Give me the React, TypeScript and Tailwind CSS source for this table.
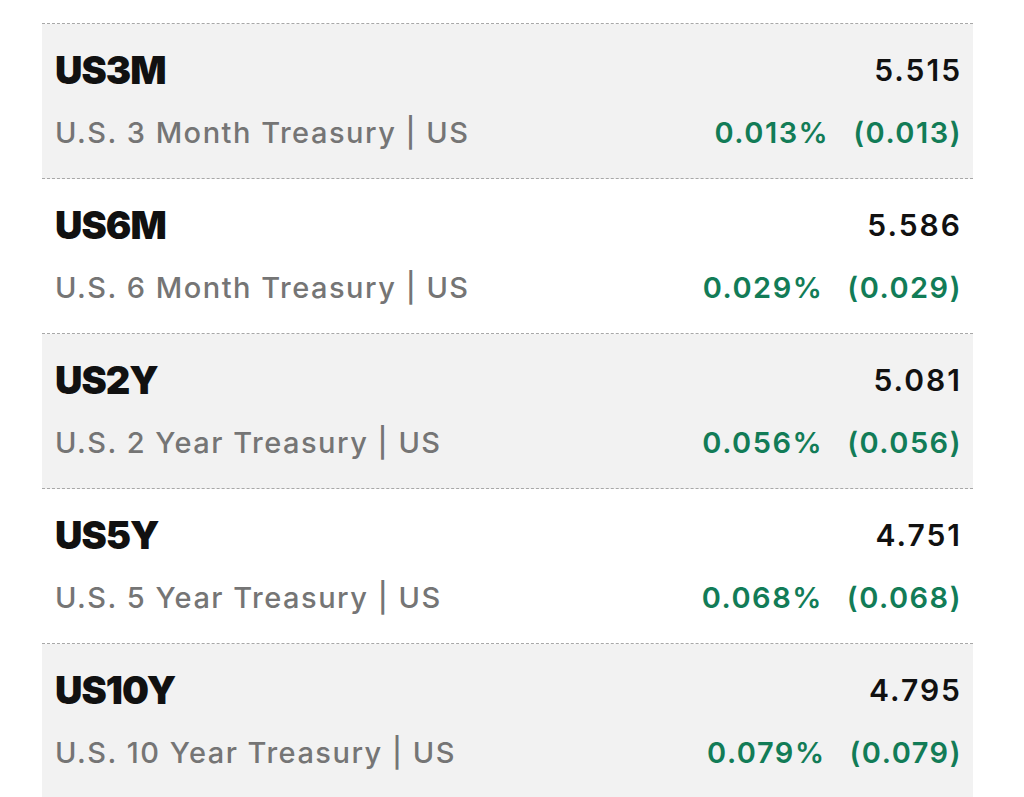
const rows = [
  { sym: 'US3M', name: 'U.S. 3 Month Treasury | US', last: '5.515', pct: '0.013%', chg: '(0.013)' },
  { sym: 'US6M', name: 'U.S. 6 Month Treasury | US', last: '5.586', pct: '0.029%', chg: '(0.029)' },
  { sym: 'US2Y', name: 'U.S. 2 Year Treasury | US', last: '5.081', pct: '0.056%', chg: '(0.056)' },
  { sym: 'US5Y', name: 'U.S. 5 Year Treasury | US', last: '4.751', pct: '0.068%', chg: '(0.068)' },
  { sym: 'US10Y', name: 'U.S. 10 Year Treasury | US', last: '4.795', pct: '0.079%', chg: '(0.079)' },
];

export default function App() {
  return (
    <div className="min-h-screen bg-white pt-[23px] pl-[42px] pr-[51px] font-['Inter','Liberation_Sans',sans-serif]">
      <div className="border-t border-dashed border-[#a8a8a8]">
        {rows.map((r, i) => (
          <div
            key={r.sym}
            className={`flex h-[155px] flex-col border-b border-dashed border-[#a8a8a8] pl-[13px] pr-[11px] pt-[23px] ${
              i % 2 === 0 ? 'bg-[#f2f2f2]' : 'bg-white'
            }`}
          >
            <div className="flex items-center justify-between">
              <span className="text-[38px] leading-[46px] font-black tracking-[-1px] text-[#111]">{r.sym}</span>
              <span className="text-[30px] leading-[46px] font-semibold tracking-[2px] text-[#111]">{r.last}</span>
            </div>
            <div className="mt-[23px] flex items-center justify-between">
              <span className="text-[29px] leading-[34px] font-medium tracking-[1.5px] text-[#757575]">{r.name}</span>
              <span className="flex gap-[24px] text-[29px] leading-[34px] font-semibold tracking-[1.5px] text-[#127c57]">
                <span>{r.pct}</span>
                <span>{r.chg}</span>
              </span>
            </div>
          </div>
        ))}
      </div>
    </div>
  );
}
